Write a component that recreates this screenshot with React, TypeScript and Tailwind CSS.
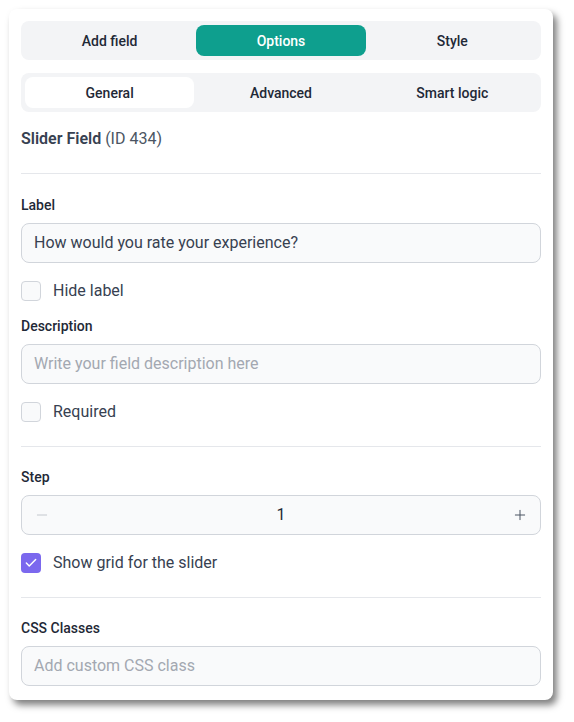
import { Check, Minus, Plus } from "lucide-react";

const TOP_TABS = ["Add field", "Options", "Style"];
const SUB_TABS = ["General", "Advanced", "Smart logic"];

function FieldLabel({ children }: { children: React.ReactNode }) {
  return <div className="mb-2 text-sm leading-5 font-medium text-[#1f2937]">{children}</div>;
}

function TextInput({ value, placeholder }: { value?: string; placeholder?: string }) {
  return (
    <div className="flex h-10 items-center rounded-lg border border-[#d1d5db] bg-[#f9fafb] px-3 text-base">
      {value ? (
        <span className="text-[#374151]">{value}</span>
      ) : (
        <span className="text-[#a3a8b1]">{placeholder}</span>
      )}
    </div>
  );
}

function CheckRow({ label, checked }: { label: string; checked?: boolean }) {
  return (
    <div className="flex h-5 items-center gap-3">
      {checked ? (
        <span className="flex h-5 w-5 items-center justify-center rounded-[4px] bg-[#7b68ee]">
          <Check className="h-3.5 w-3.5 text-white" strokeWidth={2.5} />
        </span>
      ) : (
        <span className="h-5 w-5 rounded-[4px] border border-[#d1d5db] bg-[#f9fafb]" />
      )}
      <span className="text-base text-[#374151]">{label}</span>
    </div>
  );
}

export default function App() {
  return (
    <div
      className="min-h-screen bg-white p-[9px]"
      style={{ fontFamily: "Roboto, 'Liberation Sans', sans-serif" }}
    >
      <div className="w-[544px] rounded-lg bg-white px-3 pt-3 pb-[14px] shadow-[4px_5px_7px_rgba(0,0,0,0.5)]">
        {/* Top tabs */}
        <div className="grid grid-cols-3 gap-0.5 rounded-lg bg-[#f3f4f6] p-1">
          {TOP_TABS.map((t) => (
            <div
              key={t}
              className={`flex h-[31px] items-center justify-center rounded-lg text-sm font-medium ${
                t === "Options" ? "bg-[#0e9f8e] text-white" : "text-[#1f2937]"
              }`}
            >
              {t}
            </div>
          ))}
        </div>

        {/* Sub tabs */}
        <div className="mt-[13px] grid grid-cols-3 gap-0.5 rounded-lg bg-[#f3f4f6] p-1">
          {SUB_TABS.map((t) => (
            <div
              key={t}
              className={`flex h-[31px] items-center justify-center rounded-lg text-sm font-medium text-[#1f2937] ${
                t === "General" ? "bg-white" : ""
              }`}
            >
              {t}
            </div>
          ))}
        </div>

        <div className="mt-[15px] text-base leading-6 text-[#4b5563]">
          <span className="font-semibold text-[#374151]">Slider Field</span> (ID 434)
        </div>

        <div className="mt-[22px] h-px bg-[#e5e7eb]" />

        {/* General */}
        <div className="pt-[21px]">
          <FieldLabel>Label</FieldLabel>
          <TextInput value="How would you rate your experience?" />
          <div className="mt-[18px]">
            <CheckRow label="Hide label" />
          </div>
          <div className="mt-[15px]">
            <FieldLabel>Description</FieldLabel>
            <TextInput placeholder="Write your field description here" />
          </div>
          <div className="mt-[18px]">
            <CheckRow label="Required" />
          </div>
        </div>

        <div className="mt-6 h-px bg-[#e5e7eb]" />

        {/* Step */}
        <div className="pt-5">
          <FieldLabel>Step</FieldLabel>
          <div className="flex h-10 items-center justify-between rounded-lg border border-[#d1d5db] bg-[#f9fafb] px-3">
            <Minus className="h-4 w-4 text-[#c4c8ce]" strokeWidth={1.5} />
            <span className="text-base text-[#1f2937]">1</span>
            <Plus className="h-4 w-4 text-[#4b5563]" strokeWidth={1.5} />
          </div>
          <div className="mt-[18px]">
            <CheckRow label="Show grid for the slider" checked />
          </div>
        </div>

        <div className="mt-6 h-px bg-[#e5e7eb]" />

        {/* CSS */}
        <div className="pt-5">
          <FieldLabel>CSS Classes</FieldLabel>
          <TextInput placeholder="Add custom CSS class" />
        </div>
      </div>
    </div>
  );
}
